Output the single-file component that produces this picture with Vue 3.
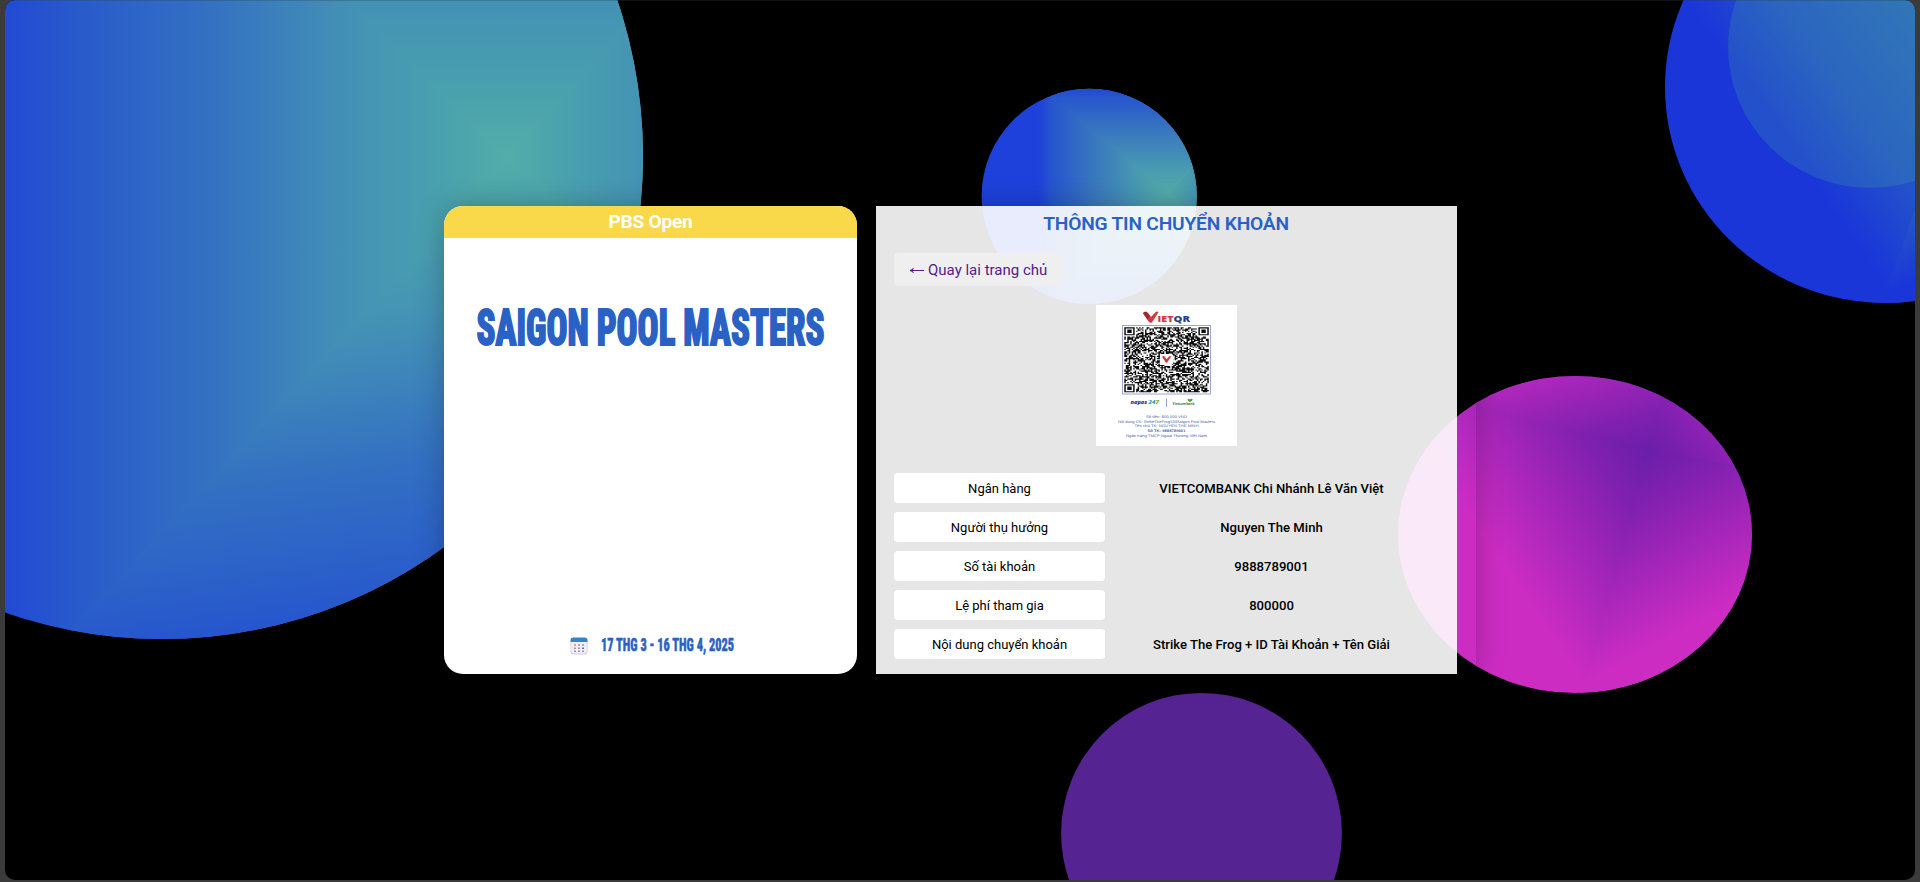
<script setup>
const labels = [
  ['Ngân hàng', 'VIETCOMBANK Chi Nhánh Lê Văn Việt'],
  ['Người thụ hưởng', 'Nguyen The Minh'],
  ['Số tài khoản', '9888789001'],
  ['Lệ phí tham gia', '800000'],
  ['Nội dung chuyển khoản', 'Strike The Frog + ID Tài Khoản + Tên Giải'],
]

const SIZE = 57

function finder(x, y, ox, oy) {
  const dx = x - ox
  const dy = y - oy
  if (dx < -1 || dy < -1 || dx > 7 || dy > 7) return null
  if (dx < 0 || dy < 0 || dx > 6 || dy > 6) return false
  const ring = Math.max(Math.abs(dx - 3), Math.abs(dy - 3))
  return ring !== 2
}

function buildCode() {
  let seed = 48271
  let d = ''
  for (let y = 0; y < SIZE; y++) {
    for (let x = 0; x < SIZE; x++) {
      seed = (seed * 16807) % 2147483647
      let on = seed / 2147483647 < 0.54
      for (const [ox, oy] of [[0, 0], [SIZE - 7, 0], [0, SIZE - 7]]) {
        const f = finder(x, y, ox, oy)
        if (f !== null) on = f
      }
      if (on) d += `M${x} ${y}h1v1h-1z`
    }
  }
  return d
}
const code = buildCode()
</script>

<template>
  <div class="screen">
    <div class="frame">
      <svg class="backdrop" viewBox="5 0 1910 880" width="1910" height="880">
        <defs>
          <clipPath id="c-big"><ellipse cx="162" cy="156" rx="481" ry="483" /></clipPath>
          <clipPath id="c-small"><circle cx="1089.2" cy="196.3" r="107.6" /></clipPath>
          <clipPath id="c-right"><ellipse cx="1885" cy="87" rx="220" ry="216" /></clipPath>
          <clipPath id="c-pink"><ellipse cx="1575" cy="534.5" rx="177" ry="158.5" /></clipPath>

          <linearGradient id="teal">
            <stop offset="0" stop-color="#53ada8" />
            <stop offset=".14" stop-color="#49a0ae" />
            <stop offset=".3" stop-color="#4493b5" />
            <stop offset=".6" stop-color="#3370c2" />
            <stop offset=".84" stop-color="#295ccb" />
            <stop offset="1" stop-color="#214ad4" />
          </linearGradient>
          <linearGradient id="b-l" href="#teal" gradientUnits="userSpaceOnUse" x1="507" y1="156" x2="5" y2="156" />
          <linearGradient id="b-b" href="#teal" gradientUnits="userSpaceOnUse" x1="507" y1="156" x2="571" y2="637" />
          <linearGradient id="b-t" href="#teal" gradientUnits="userSpaceOnUse" x1="507" y1="156" x2="507" y2="-327" />
          <linearGradient id="b-r" href="#teal" gradientUnits="userSpaceOnUse" x1="507" y1="156" x2="957" y2="156" />

          <linearGradient id="teal2">
            <stop offset="0" stop-color="#53ada8" />
            <stop offset=".25" stop-color="#4798b2" />
            <stop offset=".6" stop-color="#3774c0" />
            <stop offset=".9" stop-color="#2654cf" />
            <stop offset="1" stop-color="#1e41db" />
          </linearGradient>
          <linearGradient id="s-l" href="#teal2" gradientUnits="userSpaceOnUse" x1="1168" y1="193" x2="1038" y2="193" />
          <linearGradient id="s-t" href="#teal2" gradientUnits="userSpaceOnUse" x1="1168" y1="193" x2="1168" y2="85" />
          <linearGradient id="s-b" href="#teal2" gradientUnits="userSpaceOnUse" x1="1168" y1="193" x2="1168" y2="315" />
          <linearGradient id="s-r" href="#teal2" gradientUnits="userSpaceOnUse" x1="1168" y1="193" x2="1270" y2="193" />

          <linearGradient id="violet">
            <stop offset="0" stop-color="#6b1eaa" />
            <stop offset=".25" stop-color="#8020b0" />
            <stop offset="1" stop-color="#cd2cc3" />
          </linearGradient>
          <linearGradient id="p-l" href="#violet" gradientUnits="userSpaceOnUse" x1="1647" y1="450" x2="1494.6" y2="553" />
          <linearGradient id="p-t" href="#violet" gradientUnits="userSpaceOnUse" x1="1647" y1="450" x2="1607" y2="316" />
          <linearGradient id="p-r" href="#violet" gradientUnits="userSpaceOnUse" x1="1647" y1="450" x2="1759" y2="351" />
          <linearGradient id="p-b" href="#violet" gradientUnits="userSpaceOnUse" x1="1647" y1="450" x2="1731.6" y2="605.6" />

          <linearGradient id="r-g" gradientUnits="userSpaceOnUse" x1="1820" y1="190" x2="1970" y2="85">
            <stop offset="0" stop-color="#1a36d9" />
            <stop offset=".4" stop-color="#2351cb" />
            <stop offset="1" stop-color="#2b66bf" />
          </linearGradient>
          <linearGradient id="r-b" gradientUnits="userSpaceOnUse" x1="1885" y1="292" x2="1858" y2="212">
            <stop offset="0" stop-color="#1a36d9" />
            <stop offset="1" stop-color="#2a60bf" />
          </linearGradient>
        </defs>

        <g clip-path="url(#c-big)">
          <rect x="-400" y="-400" width="1100" height="1100" fill="url(#b-l)" />
          <path d="M507 156L-355 1090H900L660 317Z" fill="url(#b-b)" />
          <path d="M507 156L184 -155H790Z" fill="url(#b-t)" />
          <path d="M507 156L690 -47V360Z" fill="url(#b-r)" />
        </g>

        <g clip-path="url(#c-small)">
          <rect x="970" y="80" width="240" height="240" fill="url(#s-l)" />
          <path d="M1168 193L1023 74H1230V125Z" fill="url(#s-t)" />
          <path d="M1168 193L1043 311H1230V264Z" fill="url(#s-b)" />
          <path d="M1168 193L1230 125V264Z" fill="url(#s-r)" />
        </g>

        <g clip-path="url(#c-right)">
          <rect x="1650" y="-140" width="280" height="450" fill="url(#r-g)" />
          <path d="M1885 295L1915 210V310H1885Z" fill="url(#r-b)" />
        </g>
        <ellipse cx="1870" cy="47" rx="142" ry="141" fill="#4cb898" fill-opacity=".2" />

        <g clip-path="url(#c-pink)">
          <rect x="1390" y="370" width="370" height="330" fill="url(#p-l)" />
          <path d="M1647 450L1347 376V300H1689Z" fill="url(#p-t)" />
          <path d="M1647 450L1689 300H1780V475Z" fill="url(#p-r)" />
          <path d="M1647 450L1780 475V720H1572Z" fill="url(#p-b)" />
        </g>

        <circle cx="1201.5" cy="833.3" r="140.4" fill="#552492" />
      </svg>

      <main class="stage">
        <section class="card">
          <header class="card-head">PBS Open</header>
          <svg class="card-title" width="413" height="52" viewBox="0 0 413 52">
            <text x="32.5" y="44" textLength="348" lengthAdjust="spacingAndGlyphs">SAIGON POOL MASTERS</text>
          </svg>
          <div class="card-date">
            <svg class="calendar" width="18" height="18" viewBox="0 0 18 18">
              <rect x=".5" y="1" width="17" height="16.5" rx="3" fill="#d2cbdc" />
              <rect x="1.2" y="1" width="15.6" height="15.4" rx="2.4" fill="#f2edf7" />
              <path d="M.5 5V3.4A2.8 2.8 0 0 1 3.3.6h11.4a2.8 2.8 0 0 1 2.8 2.8V5z" fill="#3783c9" />
              <g fill="#9b93a8">
                <path d="M4 7.2h2v1.6H4zM8 7.2h2v1.6H8zM12 7.2h2v1.6h-2zM4 10.4h2V12H4zM8 10.4h2V12H8zM4 13.4h2V15H4zM8 13.4h2V15H8zM12 13.4h2V15h-2z" />
                <path d="M12 10.4h2V12h-2z" fill="#3783c9" />
              </g>
            </svg>
            <svg width="136" height="20" viewBox="0 0 136 20">
              <text x="1" y="15.2" textLength="133" lengthAdjust="spacingAndGlyphs">17 THG 3 - 16 THG 4, 2025</text>
            </svg>
          </div>
        </section>

        <section class="panel">
          <h1 class="panel-title">THÔNG TIN CHUYỂN KHOẢN</h1>
          <a class="back"><svg width="15" height="10" viewBox="0 0 15 10"><path d="M15 5.500H1.500M4.500 3.200Q3.600 5 1 5.500Q3.600 6 4.500 7.800" /></svg>Quay lại trang chủ</a>
          <svg class="qr" width="141" height="141" viewBox="0 0 141 141">
            <rect width="141" height="141" fill="#fff" />
            <path d="M47 8.200Q49.500 5.500 52 8.200L55 12L59.500 7.200Q61 6 62.600 7L56 17.200Q54.500 18.500 53 17Z" fill="#d8353c" />
            <path d="M47 8.200Q49.500 5.500 52 8.200L54 10.800L51.500 14.600Z" fill="#a3272e" />
            <text x="61.500" y="17.200" class="logo red" textLength="16" lengthAdjust="spacingAndGlyphs">IET</text>
            <text x="77.500" y="17.200" class="logo blue" textLength="16.500" lengthAdjust="spacingAndGlyphs">QR</text>
            <rect x="26.500" y="20.500" width="88" height="68.500" fill="#fff" stroke="#9aa8cf" stroke-width="1" />
            <g transform="translate(28.300 22.300) scale(1.482 1.14)"><path :d="code" fill="#0d0d0d" /></g>
            <rect x="64" y="49" width="13" height="11" rx="2" fill="#fff" />
            <path d="M66 51.500Q67.500 50.300 68.800 51.800L70.500 54.200L73 51.500Q74.200 50.600 75.200 51.600L71.300 57.300Q70.500 58.300 69.500 57.300Z" fill="#d8353c" />
            <text x="34.500" y="99" class="napas blue" textLength="16.500" lengthAdjust="spacingAndGlyphs">napas</text>
            <text x="52.500" y="99" class="napas cyan" textLength="10.500" lengthAdjust="spacingAndGlyphs">24<tspan fill="#6fb843">7</tspan></text>
            <path d="M70.500 93.500v8.500" stroke="#8a9cc8" stroke-width=".9" />
            <text x="76.500" y="99.700" class="vcb" textLength="22" lengthAdjust="spacingAndGlyphs">Vietcombank</text>
            <path d="M91.500 94.300q1.500-1 2.500.2q1-1.200 2.700-.2q-.3 2.200-2.700 2.800q-2.300-.6-2.500-2.800z" fill="#4da04c" />
            <g class="fine">
              <text x="50" y="112.700" textLength="41" lengthAdjust="spacingAndGlyphs">Số tiền: 800.000 VND</text>
              <text x="22" y="117.600" textLength="97" lengthAdjust="spacingAndGlyphs">Nội dung CK: StrikeTheFrog130Saigon Pool Masters</text>
              <text x="38.500" y="122.200" textLength="64" lengthAdjust="spacingAndGlyphs">Tên chủ TK: NGUYEN THE MINH</text>
              <text x="51.500" y="127" textLength="38" lengthAdjust="spacingAndGlyphs" class="strong">Số TK: 9888789001</text>
              <text x="30" y="131.800" textLength="81" lengthAdjust="spacingAndGlyphs">Ngân hàng TMCP Ngoại Thương Việt Nam</text>
            </g>
          </svg>
          <dl class="rows">
            <div v-for="[label, value] in labels" :key="label" class="row">
              <dt>{{ label }}</dt>
              <dd>{{ value }}</dd>
            </div>
          </dl>
        </section>
      </main>
    </div>
  </div>
</template>

<style>
body {
  background: #3b3b3b;
}
</style>

<style scoped>
.screen {
  box-sizing: border-box;
  width: 1920px;
  height: 882px;
  padding: 0 5px 2px;
  overflow: hidden;
  background: #3b3b3b;
  font-family: Roboto, "Noto Sans", sans-serif;
}
.frame {
  position: relative;
  box-sizing: border-box;
  width: 1910px;
  height: 880px;
  padding: 206px 0 0 439px;
  overflow: hidden;
  border-radius: 10px;
  background: #000;
}
.frame::after {
  content: "";
  position: absolute;
  inset: 0 0 auto;
  height: 1px;
  background: rgba(60, 60, 60, 0.3);
}
.backdrop {
  position: absolute;
  top: 0;
  left: 0;
}
.stage {
  position: relative;
  display: flex;
  box-sizing: border-box;
  width: 1032px;
  height: 468px;
  padding-right: 19px;
  gap: 19px;
  border-radius: 19px 0 0 19px;
  box-shadow: 0 0 28px rgba(0, 0, 0, 0.25);
}
.card {
  display: flex;
  flex-direction: column;
  flex: none;
  width: 413px;
  overflow: hidden;
  border-radius: 19px;
  background: #fff;
}
.card-head {
  height: 32px;
  background: #f9d94a;
  color: #fff;
  font-size: 19.2px;
  font-weight: 700;
  letter-spacing: -0.3px;
  line-height: 31px;
  text-align: center;
}
.card-title {
  margin-top: 63px;
  overflow: visible;
}
.card-title text {
  fill: #2962c4;
  stroke: #2962c4;
  stroke-width: 2px;
  font: 800 50px Roboto, sans-serif;
  font-stretch: 75%;
}
.card-date {
  display: flex;
  align-items: center;
  gap: 12px;
  margin: auto 0 18px 126px;
}
.card-date svg {
  overflow: visible;
}
.card-date text {
  fill: #2962c4;
  stroke: #2962c4;
  stroke-width: 0.5px;
  font: 800 17.500px Roboto, sans-serif;
  font-stretch: 75%;
}
.panel {
  display: flex;
  flex-direction: column;
  box-sizing: border-box;
  flex: 1;
  padding: 0 19px 0 18px;
  background: rgba(255, 255, 255, 0.9);
}
.panel-title {
  height: 47px;
  margin: 0;
  color: #2962c4;
  font-size: 19.2px;
  font-weight: 600;
  letter-spacing: -0.2px;
  line-height: 35px;
  text-align: center;
}
.back {
  display: flex;
  align-items: center;
  align-self: flex-start;
  box-sizing: border-box;
  height: 33px;
  width: 168px;
  padding-left: 15px;
  gap: 4px;
  border-radius: 4px;
  background: #efefef;
  color: #551a8b;
  font-size: 15px;
  white-space: nowrap;
}
.back svg {
  fill: none;
  stroke: #551a8b;
  stroke-width: 1.1;
}
.qr {
  align-self: center;
  margin-top: 19px;
}
.logo {
  font: 800 9px "Open Sans", sans-serif;
}
.red {
  fill: #d8353c;
}
.blue {
  fill: #27418a;
}
.napas {
  font: italic 800 5px "Open Sans", sans-serif;
}
.cyan {
  fill: #2e9bd0;
}
.vcb {
  fill: #2e7d4a;
  font: 700 4px "Open Sans", sans-serif;
}
.fine {
  fill: #4a63a3;
  font: 3.700px "Liberation Sans", sans-serif;
}
.fine text {
  text-rendering: geometricPrecision;
}
.strong {
  font-weight: 700;
}
.rows {
  display: flex;
  flex-direction: column;
  gap: 9px;
  margin: 27px 0 0;
}
.row {
  display: flex;
  height: 30px;
  font-size: 13px;
  line-height: 32px;
  text-align: center;
  color: #000;
}
.row dt {
  width: 211px;
  border-radius: 4px;
  background: #fff;
}
.row dd {
  flex: 1;
  margin: 0;
  font-size: 13.100px;
  font-weight: 500;
  white-space: nowrap;
}
</style>
